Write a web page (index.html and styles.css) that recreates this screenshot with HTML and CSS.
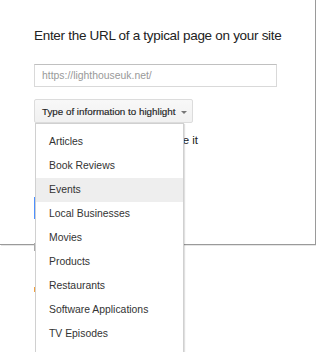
FILE: index.html
```html
<!DOCTYPE html>
<html>
<head>
<meta charset="utf-8">
<link rel="stylesheet" href="styles.css">
</head>
<body>
<div class="dialog">
  <h1 class="title">Enter the URL of a typical page on your site</h1>
  <div class="url-input">https://lighthouseuk.net/</div>
  <div class="type-wrap">
    <div class="type-button">Type of information to highlight <span class="caret"></span></div>
    <ul class="menu">
      <li>Articles</li>
      <li>Book Reviews</li>
      <li class="hover">Events</li>
      <li>Local Businesses</li>
      <li>Movies</li>
      <li>Products</li>
      <li>Restaurants</li>
      <li>Software Applications</li>
      <li>TV Episodes</li>
    </ul>
  </div>
  <div class="option">Tag this page and others like it</div>
  <div class="peek">
    <span class="peek-blue"></span>
    <span class="peek-gray"></span>
    <span class="peek-orange"></span>
  </div>
</div>
</body>
</html>
```
FILE: styles.css
```css
html, body {
  margin: 0;
  padding: 0;
  background: #fff;
  font-family: "Liberation Sans", Arial, sans-serif;
}
body {
  width: 316px;
  height: 352px;
  overflow: hidden;
}
.dialog {
  box-sizing: border-box;
  width: 316px;
  height: 245px;
  border-right: 1px solid #9a9a9a;
  border-bottom: 1px solid #9a9a9a;
  box-shadow: 1px 1px 0 #e6e6e6;
  padding: 28px 0 0 34px;
  position: relative;
}
.title {
  margin: 0;
  font-size: 13.5px;
  letter-spacing: -0.3px;
  font-weight: normal;
  line-height: 16px;
  color: #222;
  white-space: nowrap;
}
.url-input {
  box-sizing: border-box;
  margin-top: 20px;
  width: 243px;
  height: 23px;
  border: 1px solid #d9d9d9;
  border-top-color: #c0c0c0;
  padding: 0 7px;
  font-size: 10.4px;
  line-height: 21px;
  color: #999;
}
.type-wrap {
  margin-top: 12px;
  position: relative;
  height: 24px;
}
.type-button {
  box-sizing: border-box;
  display: inline-flex;
  align-items: center;
  gap: 6px;
  height: 24px;
  padding: 0 5px 0 7px;
  border: 1px solid #dcdcdc;
  border-radius: 2px;
  background: linear-gradient(#f8f8f8, #f1f1f1);
  font-size: 9.8px;
  color: #222;
  -webkit-text-stroke: 0.15px #222;
  white-space: nowrap;
}
.caret {
  width: 0;
  height: 0;
  border-left: 3px solid transparent;
  border-right: 3px solid transparent;
  border-top: 3px solid #777;
  margin-top: 2px;
}
.menu {
  position: absolute;
  left: 1px;
  top: 24px;
  z-index: 2;
  margin: 0;
  padding: 6px 0;
  list-style: none;
  width: 149px;
  box-sizing: border-box;
  background: #fff;
  border: 1px solid #d0d0d0;
  box-shadow: 1px 1px 1px rgba(0,0,0,0.12);
}
.menu li {
  height: 24px;
  line-height: 24px;
  padding-left: 13px;
  font-size: 10.4px;
  color: #333;
}
.menu li.hover {
  background: #eee;
}
.option {
  margin-top: 10px;
  width: 164px;
  text-align: right;
  white-space: nowrap;
  font-size: 11.5px;
  color: #222;
  line-height: 15px;
}
.peek {
  position: absolute;
  left: 34px;
  top: 0;
}
.peek span {
  position: absolute;
  left: 0;
  width: 2px;
}
.peek-blue { top: 197px; height: 22px; background: #4d90fe; }
.peek-gray { top: 243px; height: 8px; background: #aaa; }
.peek-orange { top: 287px; height: 5px; background: #f0a040; }
```
